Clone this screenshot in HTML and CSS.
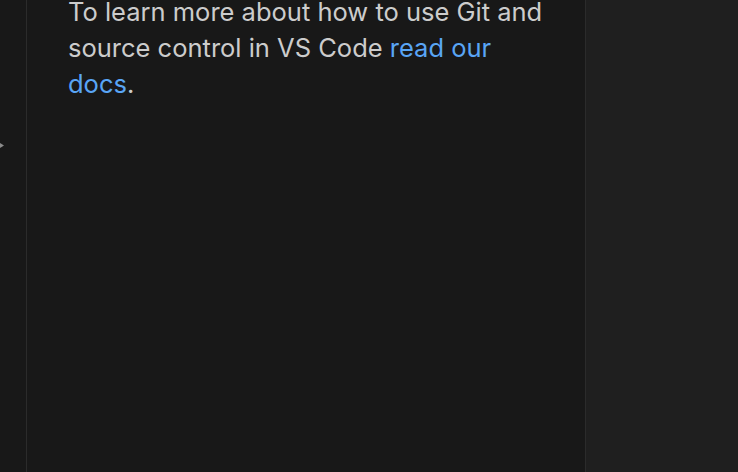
FILE: index.html
```html
<!DOCTYPE html>
<html>
<head>
<meta charset="utf-8">
<link rel="stylesheet" href="styles.css">
</head>
<body>
<div class="app">
  <div class="strip"><span class="chev"></span></div>
  <div class="panel">
    <p class="msg">To learn more about how to use Git and source control in VS Code <a href="#" class="link">read our docs</a>.</p>
  </div>
  <div class="editor"></div>
</div>
</body>
</html>
```
FILE: styles.css
```css
html, body {
  margin: 0;
  padding: 0;
  background: #181818;
}
.app {
  display: flex;
  width: 738px;
  height: 472px;
  overflow: hidden;
}
.strip {
  width: 26px;
  flex: none;
  background: #181818;
  border-right: 1px solid #2b2b2b;
  position: relative;
}
.chev {
  position: absolute;
  left: 0;
  top: 143px;
  width: 4px;
  height: 5px;
  background: #8a8a8a;
  clip-path: polygon(0 0, 100% 50%, 0 100%);
}
.panel {
  width: 559px;
  flex: none;
  background: #181818;
  border-right: 1px solid #2b2b2b;
  padding: 0 34px 0 41px;
  box-sizing: border-box;
}
.msg {
  margin: -6px 0 0 0;
  font-family: Inter, "Liberation Sans", sans-serif;
  font-size: 25.5px;
  line-height: 36px;
  color: #cccccc;
}
.link {
  color: #59a5f5;
  text-decoration: none;
}
.editor {
  flex: 1;
  background: #1f1f1f;
}
```
